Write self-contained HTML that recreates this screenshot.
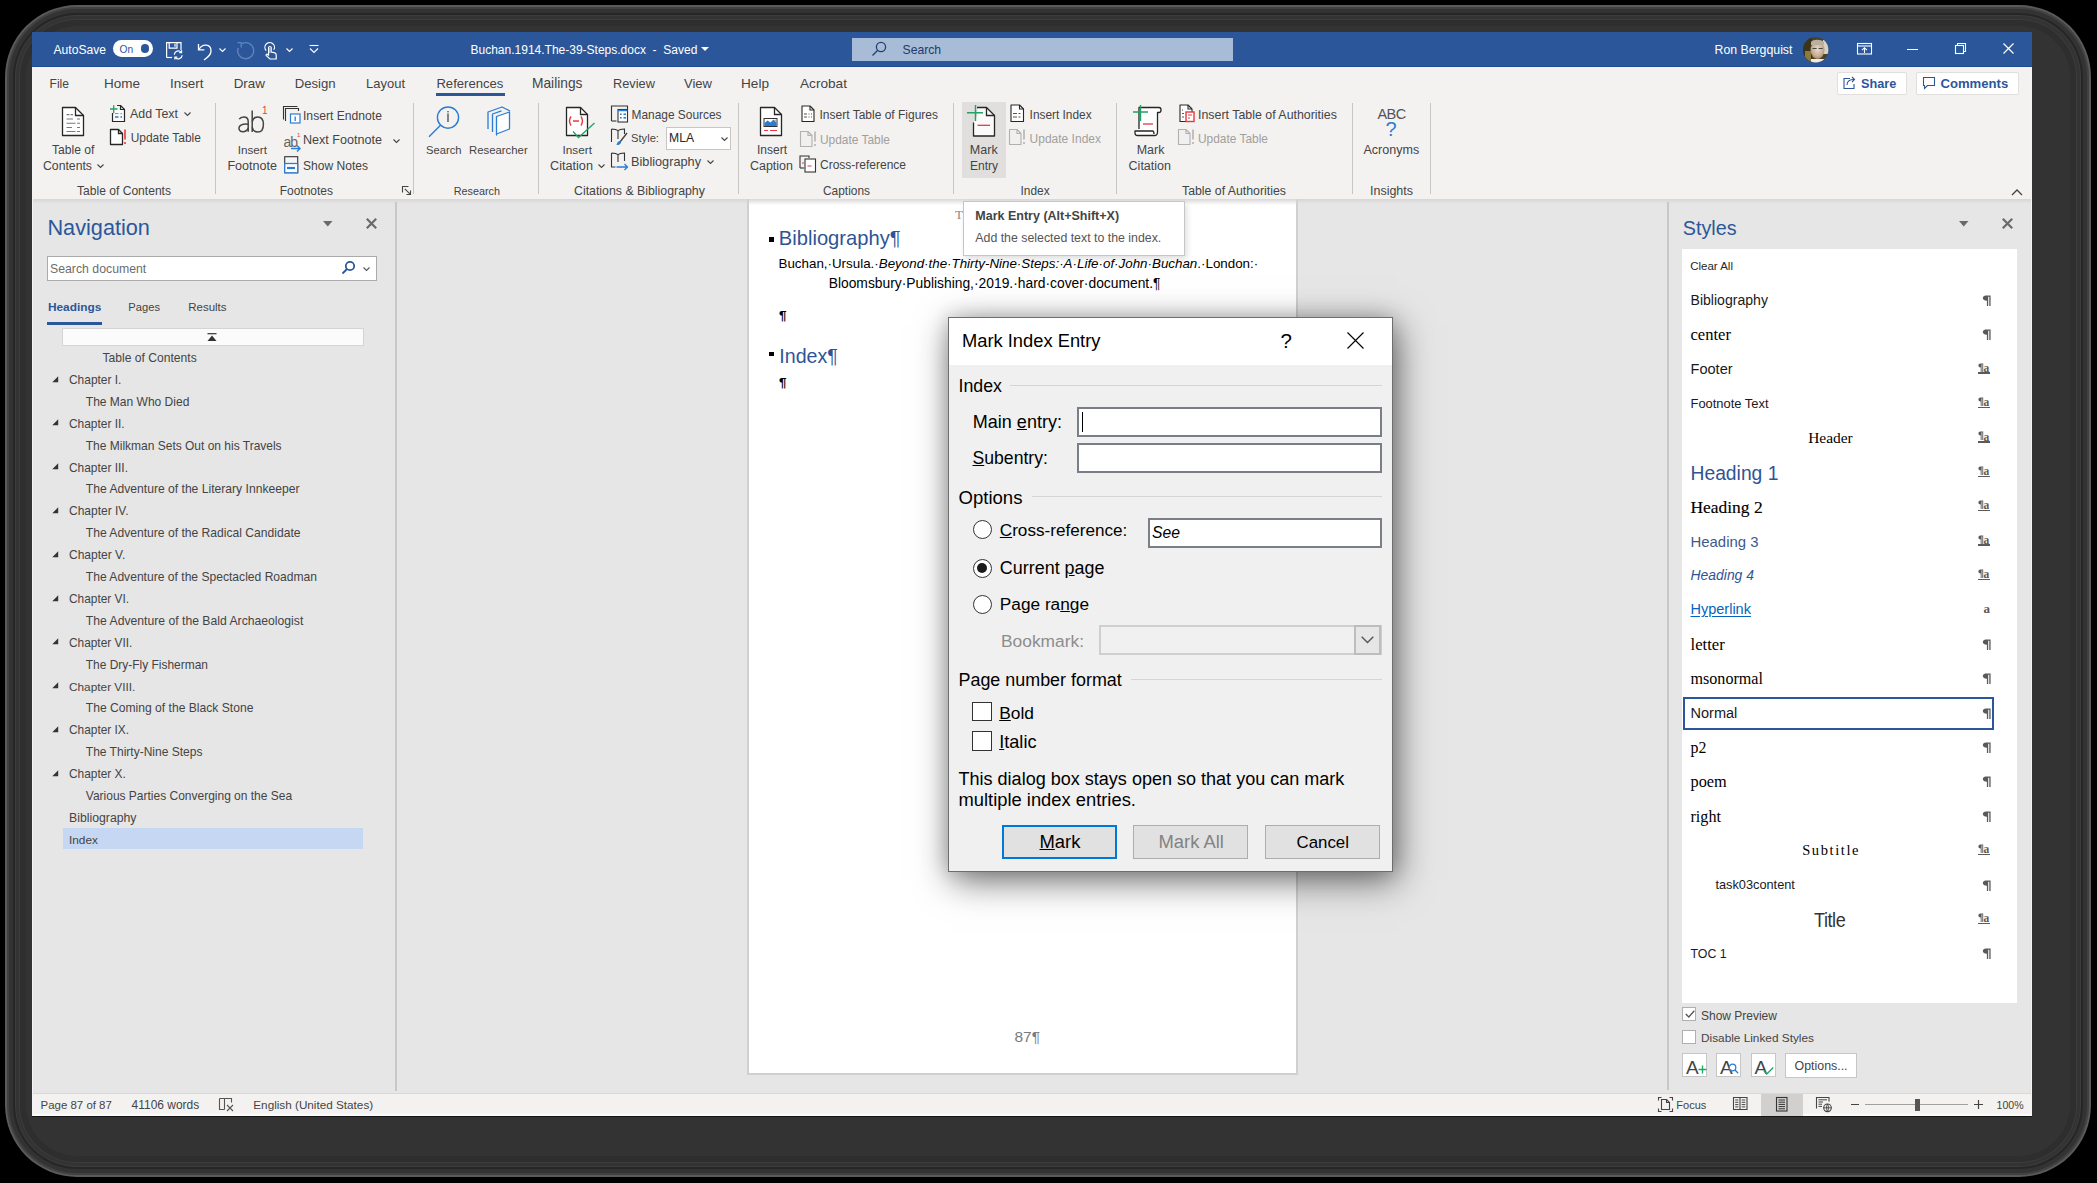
<!DOCTYPE html>
<html><head><meta charset="utf-8"><style>
html,body{margin:0;padding:0;}
body{width:2097px;height:1183px;background:#000;position:relative;overflow:hidden;font-family:"Liberation Sans",sans-serif;}
.a{position:absolute;}
.t{position:absolute;white-space:nowrap;line-height:1;}
svg{overflow:visible}
</style></head><body>

<div class="a" style="left:5px;top:5px;width:2086px;height:1172px;background:#5a5a5a;border-radius:72px;"></div>
<div class="a" style="left:7px;top:7px;width:2082px;height:1168px;background:#414141;border-radius:70px;"></div>
<div class="a" style="left:9px;top:9px;width:2078px;height:1164px;background:#333;border-radius:68px;"></div>
<div class="a" style="left:13px;top:13px;width:2070px;height:1156px;background:#262626;border-radius:64px;"></div>
<div class="a" style="left:15px;top:15px;width:2066px;height:1152px;background:#3c3c3c;border-radius:62px;"></div>
<div class="a" style="left:16px;top:16px;width:2064px;height:1150px;background:#333;border-radius:61px;"></div>
<div class="a" style="left:19px;top:19px;width:2058px;height:1144px;background:#3c3c3c;border-radius:58px;"></div>
<div class="a" style="left:20px;top:20px;width:2056px;height:1142px;background:#2e2e2e;border-radius:57px;"></div>
<div class="a" style="left:26px;top:26px;width:2044px;height:1130px;background:#333;border-radius:51px;"></div>
<div class="a" style="left:32px;top:32px;width:2000px;height:1084px;background:#e6e6e6;"></div>
<div class="a" style="left:32px;top:32px;width:2000px;height:35px;background:#2b579a;"></div>
<div class="a" style="left:32px;top:66px;width:2000px;height:1px;background:#1f4c8c;"></div>
<div class="a" style="left:32px;top:67px;width:2000px;height:132px;background:#f3f2f1;"></div>
<div class="a" style="left:32px;top:199px;width:2000px;height:5px;background:linear-gradient(#d6d6d6,#e6e6e6);"></div>
<div class="a" style="left:32px;top:1093px;width:2000px;height:23px;background:#f3f2f1;border-top:1px solid #d8d8d8;box-sizing:border-box;"></div>
<div class="a" style="left:32px;top:1114px;width:2000px;height:2px;background:#fbfbfb;"></div>
<div class="a" style="left:32px;top:1116px;width:2000px;height:1px;background:#151515;"></div>
<div class="a" style="left:32px;top:67px;width:1px;height:1049px;background:#f4f4f4;"></div>
<div class="a" style="left:2031px;top:67px;width:1px;height:1049px;background:#f4f4f4;"></div>
<div class="t" style="left:53.5px;top:44px;font-size:12.1px;color:#fff;">AutoSave</div>
<div class="a" style="left:113px;top:40px;width:40px;height:17px;background:#fff;border-radius:9px;"></div>
<div class="t" style="left:119.5px;top:45px;font-size:10.2px;color:#2b579a;">On</div>
<div class="a" style="left:140.5px;top:44.3px;width:8.5px;height:8.5px;background:#2b579a;border-radius:50%;"></div>
<svg class="a" style="left:166px;top:42px;" width="18" height="17" viewBox="0 0 18 17"><g fill="none" stroke="#fff" stroke-width="1.2"><path d="M0.6 15.5V0.6h14.4v7.5"/><path d="M0.6 15.5h5.5"/><path d="M3.2 0.6v5.6h7.8V0.6"/><path d="M9 1.8v3"/></g><g fill="none" stroke="#fff" stroke-width="1.2"><path d="M8.3 12.6a4 4 0 0 1 7-2.3"/><path d="M16.2 13.2a4 4 0 0 1-7 2.3"/><path d="M15.6 8.2v2.4h-2.4"/><path d="M8.9 17.6v-2.4h2.4"/></g></svg>
<svg class="a" style="left:197px;top:42px;" width="17" height="18" viewBox="0 0 17 18"><g fill="none" stroke="#fff" stroke-width="1.3"><path d="M2 7.5c3-6 12-6 12 1.5c0 4-3 6-7 9"/><path d="M1.5 2v5.8h5.8"/></g></svg>
<svg class="a" style="left:219px;top:48px;" width="7" height="4" viewBox="0 0 7 4"><path d="M0.5 0.5l3 3l3-3" fill="none" stroke="#fff" stroke-width="1.1"/></svg>
<svg class="a" style="left:237px;top:42px;" width="18" height="18" viewBox="0 0 18 18"><g fill="none" stroke="#5f84bd" stroke-width="1.3"><path d="M5.1 1.6A8 8 0 1 1 1.2 6"/><path d="M0.5 0.7H4.2V5.5"/></g></svg>
<svg class="a" style="left:264px;top:41.5px;" width="14" height="18" viewBox="0 0 14 18"><g fill="none" stroke="#fff" stroke-width="1.2"><path d="M2.2 8.6A4.8 4.8 0 1 1 9.8 7.8"/><path d="M4.6 13.5V5.8a1.3 1.3 0 0 1 2.6 0V10l3 0.6c1.3 0.3 2 1 2 2.3V17H6L2.3 13.6c-0.6-0.7 0-1.8 1-1.3l1.3 1.2"/></g><path d="M5.9 6v5" stroke="#9fb6d8" stroke-width="1.6"/></svg>
<svg class="a" style="left:286px;top:48px;" width="7" height="4" viewBox="0 0 7 4"><path d="M0.5 0.5l3 3l3-3" fill="none" stroke="#fff" stroke-width="1.1"/></svg>
<svg class="a" style="left:309px;top:45px;" width="10" height="9" viewBox="0 0 10 9"><g fill="none" stroke="#fff" stroke-width="1.1"><path d="M0.5 0.5h9"/><path d="M1 3.5l4 4l4-4"/></g></svg>
<div class="t" style="left:470.5px;top:44px;font-size:12.0px;color:#fff;">Buchan.1914.The-39-Steps.docx &nbsp;- &nbsp;Saved</div>
<svg class="a" style="left:701px;top:47px;" width="8" height="5" viewBox="0 0 8 5"><path d="M0 0h8l-4 4z" fill="#fff"/></svg>
<div class="a" style="left:852px;top:38px;width:381px;height:23px;background:#a8bcd8;"></div>
<svg class="a" style="left:871px;top:41px;" width="16" height="16" viewBox="0 0 16 16"><g fill="none" stroke="#24416e" stroke-width="1.3"><circle cx="10" cy="6" r="4.6"/><path d="M6.7 9.3L1.5 14.5"/></g></svg>
<div class="t" style="left:902.5px;top:44px;font-size:12.2px;color:#1e3b66;">Search</div>
<div class="t" style="left:1714.5px;top:44px;font-size:12.3px;color:#fff;">Ron Bergquist</div>
<svg class="a" style="left:1802.6px;top:36.6px;" width="25.4" height="25.4" viewBox="0 0 25.4 25.4"><defs><clipPath id="av"><circle cx="12.7" cy="12.7" r="12.7"/></clipPath><radialGradient id="fg" cx="0.5" cy="0.45" r="0.55"><stop offset="0" stop-color="#e9dccd"/><stop offset="0.7" stop-color="#c9ae92"/><stop offset="1" stop-color="#a88a6a"/></radialGradient></defs><g clip-path="url(#av)"><rect width="26" height="26" fill="#4a4226"/><rect x="0" y="0" width="9" height="26" fill="#3a3418"/><rect x="2" y="14" width="6" height="12" fill="#8c7a3a"/><rect x="20" y="3" width="6" height="14" fill="#d8d2c0"/><ellipse cx="14.5" cy="13" rx="7" ry="9" fill="url(#fg)"/><path d="M8 5c2-3 10-3 13 0v3H8z" fill="#b8b0a0"/><path d="M9.5 11.5h4.2M15.5 11.5h4.2" stroke="#444" stroke-width="1"/><rect x="8" y="22" width="14" height="6" fill="#f0ece4"/></g></svg>
<svg class="a" style="left:1857px;top:43px;" width="15" height="12" viewBox="0 0 15 12"><g fill="none" stroke="#fff" stroke-width="1.1"><rect x="0.5" y="0.5" width="14" height="10.5"/><path d="M0.5 3h14"/><path d="M7.5 10V5"/><path d="M5 7.2l2.5-2.5l2.5 2.5"/></g></svg>
<div class="a" style="left:1907px;top:49px;width:11px;height:1.2px;background:#fff;"></div>
<svg class="a" style="left:1955px;top:43px;" width="11" height="11" viewBox="0 0 11 11"><g fill="none" stroke="#fff" stroke-width="1.1"><rect x="0.5" y="2.5" width="8" height="8"/><path d="M2.5 2.5v-2h8v8h-2"/></g></svg>
<svg class="a" style="left:2003px;top:43px;" width="11" height="11" viewBox="0 0 11 11"><g fill="none" stroke="#fff" stroke-width="1.2"><path d="M0.5 0.5l10 10M10.5 0.5l-10 10"/></g></svg>
<div class="t" style="left:49.5px;top:78px;font-size:12.09px;color:#444;">File</div>
<div class="t" style="left:104px;top:77px;font-size:13.5px;color:#444;">Home</div>
<div class="t" style="left:170px;top:77px;font-size:13.4px;color:#444;">Insert</div>
<div class="t" style="left:233.7px;top:77px;font-size:13.41px;color:#444;">Draw</div>
<div class="t" style="left:294.7px;top:77px;font-size:13.17px;color:#444;">Design</div>
<div class="t" style="left:366px;top:77px;font-size:12.99px;color:#444;">Layout</div>
<div class="t" style="left:436.4px;top:77px;font-size:13.12px;color:#444;">References</div>
<div class="t" style="left:532px;top:77px;font-size:13.76px;color:#444;">Mailings</div>
<div class="t" style="left:613px;top:78px;font-size:12.8px;color:#444;">Review</div>
<div class="t" style="left:684px;top:77px;font-size:13.02px;color:#444;">View</div>
<div class="t" style="left:741px;top:77px;font-size:13.61px;color:#444;">Help</div>
<div class="t" style="left:800px;top:77px;font-size:13.64px;color:#444;">Acrobat</div>
<div class="a" style="left:436px;top:93px;width:69px;height:3px;background:#2b579a;"></div>
<div class="a" style="left:1836.5px;top:71.5px;width:70px;height:23px;background:#fff;border:1px solid #e1dfdd;border-radius:2px;box-sizing:border-box;"></div>
<svg class="a" style="left:1843px;top:76px;" width="13" height="13" viewBox="0 0 13 13"><g fill="none" stroke="#2b579a" stroke-width="1.1"><path d="M7 2.5H1v10h10V8"/><path d="M4 9c0-4 3-5.5 7-5.5"/><path d="M9 1l2.5 2.5L9 6"/></g></svg>
<div class="t" style="left:1861px;top:78px;font-size:12.7px;color:#2b579a;font-weight:bold;">Share</div>
<div class="a" style="left:1915.5px;top:71.5px;width:103px;height:23px;background:#fff;border:1px solid #e1dfdd;border-radius:2px;box-sizing:border-box;"></div>
<svg class="a" style="left:1923px;top:77px;" width="12" height="12" viewBox="0 0 12 12"><g fill="none" stroke="#2b579a" stroke-width="1.1"><path d="M0.5 0.5h11v8h-7l-3 3v-3h-1z"/></g></svg>
<div class="t" style="left:1940.5px;top:77px;font-size:13.1px;color:#2b579a;font-weight:bold;">Comments</div>
<div class="a" style="left:215px;top:103px;width:1px;height:91px;background:#c8c6c4;"></div>
<div class="a" style="left:413px;top:103px;width:1px;height:91px;background:#c8c6c4;"></div>
<div class="a" style="left:538px;top:103px;width:1px;height:91px;background:#c8c6c4;"></div>
<div class="a" style="left:738px;top:103px;width:1px;height:91px;background:#c8c6c4;"></div>
<div class="a" style="left:953px;top:103px;width:1px;height:91px;background:#c8c6c4;"></div>
<div class="a" style="left:1116px;top:103px;width:1px;height:91px;background:#c8c6c4;"></div>
<div class="a" style="left:1352px;top:103px;width:1px;height:91px;background:#c8c6c4;"></div>
<div class="a" style="left:1430px;top:103px;width:1px;height:91px;background:#c8c6c4;"></div>
<div class="t" style="left:77px;top:185px;font-size:12.08px;color:#444;">Table of Contents</div>
<div class="t" style="left:279.7px;top:185px;font-size:11.98px;color:#444;">Footnotes</div>
<div class="t" style="left:453.7px;top:186px;font-size:10.82px;color:#444;">Research</div>
<div class="t" style="left:574px;top:185px;font-size:12.34px;color:#444;">Citations &amp; Bibliography</div>
<div class="t" style="left:823px;top:186px;font-size:11.91px;color:#444;">Captions</div>
<div class="t" style="left:1020.5px;top:186px;font-size:11.9px;color:#444;">Index</div>
<div class="t" style="left:1182px;top:185px;font-size:12.31px;color:#444;">Table of Authorities</div>
<div class="t" style="left:1370px;top:185px;font-size:12.48px;color:#444;">Insights</div>
<svg class="a" style="left:61px;top:106px;" width="24" height="31" viewBox="0 0 24 31"><path d="M1.5 1.5h13l8 8v20h-21z" fill="#fff" stroke="#262626" stroke-width="1.3" stroke-linejoin="round"/><path d="M14.5 1.5v8h8" fill="none" stroke="#262626" stroke-width="1.3"/><g stroke="#7a7a7a" stroke-width="1.1"><path d="M5.5 8.6h3M9.5 8.6h2.5M5.5 13h6.5M16 13h3M5.5 17.3h9M16 17.3h3M5.5 21.5h5.5M16 21.5h3M5.5 25.5h9M16 25.5h3"/></g></svg>
<div class="t" style="left:52px;top:144px;font-size:12.13px;color:#444;">Table of</div>
<div class="t" style="left:43px;top:160px;font-size:12.24px;color:#444;">Contents</div>
<svg class="a" style="left:96.5px;top:164px;" width="7" height="4" viewBox="0 0 7 4"><path d="M0.5 0.5l3 3l3-3" fill="none" stroke="#444" stroke-width="1.1"/></svg>
<svg class="a" style="left:109px;top:104px;" width="18" height="19" viewBox="0 0 18 19"><path d="M3.5 9v8.5h12V5.5l-4-4H8" fill="#fafafa" stroke="#262626" stroke-width="1.2" stroke-linejoin="round"/><path d="M11.5 1.5v4h4" fill="none" stroke="#262626" stroke-width="1.2"/><path d="M1 5h7.5M4.7 1.3v8" stroke="#21a366" stroke-width="1.3"/><path d="M6 9.6h3.5M11.5 9.6h1.5" stroke="#8a8a8a" stroke-width="1"/><path d="M6 13h3.5M11.5 13h1.5" stroke="#2b7cd3" stroke-width="1.3"/></svg>
<div class="t" style="left:130px;top:108px;font-size:12.39px;color:#444;">Add Text</div>
<svg class="a" style="left:183.5px;top:111.5px;" width="7" height="4" viewBox="0 0 7 4"><path d="M0.5 0.5l3 3l3-3" fill="none" stroke="#444" stroke-width="1.1"/></svg>
<svg class="a" style="left:109px;top:128px;" width="18" height="18" viewBox="0 0 18 18"><path d="M1.5 1.5h8l4 4v11h-12z" fill="#fff" stroke="#262626" stroke-width="1.3" stroke-linejoin="round"/><path d="M9.5 1.5v4h4" fill="none" stroke="#262626" stroke-width="1.3"/><path d="M16 1.5v10M16 14v2" stroke="#e8383d" stroke-width="1.6"/></svg>
<div class="t" style="left:130.7px;top:133px;font-size:11.96px;color:#444;">Update Table</div>
<svg class="a" style="left:236px;top:109px;" width="32" height="25" viewBox="0 0 32 25"><g fill="none" stroke="#444" stroke-width="1.5"><path d="M3.2 10.2c1-1.6 2.6-2.3 4.6-2.3c3 0 4.4 1.6 4.4 4.6V22.8"/><path d="M12.2 15.2c-1.6-0.2-3.4-0.2-4.8 0.1c-2.8 0.6-4.4 2-4.4 4c0 2.2 1.6 3.4 4 3.4c2.4 0 4.2-1.4 5.2-3.6"/><path d="M16.2 1.5V23"/><path d="M16.2 12.5c1-3 3-4.6 5.6-4.6c3.6 0 5.6 3 5.6 7.5c0 4.6-2.2 7.6-5.8 7.6c-2.6 0-4.6-1.6-5.4-4.6"/></g></svg>
<div class="t" style="left:262px;top:106px;font-size:10px;color:#e8383d;">1</div>
<div class="t" style="left:237.7px;top:144px;font-size:11.72px;color:#444;">Insert</div>
<div class="t" style="left:227.4px;top:160px;font-size:12.56px;color:#444;">Footnote</div>
<svg class="a" style="left:283px;top:106px;" width="18" height="18" viewBox="0 0 18 18"><g fill="none" stroke="#333" stroke-width="1.1"><path d="M0.5 13.5V0.5h14"/><path d="M2.5 15V2.5h13V5"/></g><g fill="#fff" stroke="#2b7cd3" stroke-width="1.2"><rect x="7.5" y="8" width="9.5" height="9"/></g><path d="M12.2 10.5v4.5" stroke="#2b7cd3" stroke-width="1.3"/></svg>
<div class="t" style="left:303px;top:110px;font-size:12.15px;color:#444;">Insert Endnote</div>
<div class="t" style="left:283.5px;top:135px;font-size:14px;color:#666;letter-spacing:-1px;">ab</div>
<div class="t" style="left:297px;top:132px;font-size:6px;color:#e8383d;">1</div>
<svg class="a" style="left:290px;top:144px;" width="12" height="9" viewBox="0 0 12 9"><g fill="none" stroke="#2b7cd3" stroke-width="1.4"><path d="M1 4.5h9M7 1.5l3 3l-3 3"/></g></svg>
<div class="t" style="left:303px;top:134px;font-size:12.58px;color:#444;">Next Footnote</div>
<svg class="a" style="left:392.5px;top:139px;" width="7" height="4" viewBox="0 0 7 4"><path d="M0.5 0.5l3 3l3-3" fill="none" stroke="#444" stroke-width="1.1"/></svg>
<svg class="a" style="left:283.5px;top:155.5px;" width="15" height="18" viewBox="0 0 15 18"><rect x="0.7" y="0.7" width="13" height="16" fill="#f6f6f6" stroke="#333" stroke-width="1.1"/><rect x="0.7" y="7.5" width="13" height="9.3" fill="#fff" stroke="#2b7cd3" stroke-width="1.3"/><path d="M3 12h8" stroke="#2b7cd3" stroke-width="2.2"/></svg>
<div class="t" style="left:303px;top:160px;font-size:12.05px;color:#444;">Show Notes</div>
<svg class="a" style="left:402px;top:186px;" width="9" height="9" viewBox="0 0 9 9"><g fill="none" stroke="#444" stroke-width="1.1"><path d="M0.5 6.5V0.5h6"/><path d="M2.8 2.8l5.4 5.4M8.5 4.5v4H4.5"/></g></svg>
<svg class="a" style="left:427px;top:105px;" width="34" height="34" viewBox="0 0 34 34"><circle cx="21" cy="12.6" r="10.6" fill="none" stroke="#2b7cd3" stroke-width="1.4"/><path d="M13.5 20.2L2 31.7" stroke="#2b7cd3" stroke-width="1.5"/><path d="M21 8.5v8.5" stroke="#444" stroke-width="1.3"/><circle cx="21" cy="6.7" r="0.8" fill="#444"/></svg>
<div class="t" style="left:426px;top:145px;font-size:11.2px;color:#444;">Search</div>
<svg class="a" style="left:486px;top:106px;" width="26" height="31" viewBox="0 0 26 31"><g fill="none" stroke="#2b7cd3" stroke-width="1.3" stroke-linejoin="round"><path d="M2 23V6l14-5l8 4"/><path d="M6.5 26V8l9-3.2"/><path d="M10.5 29V10.5L23.5 6v17L10.5 28z" fill="#fff"/></g></svg>
<div class="t" style="left:469px;top:145px;font-size:11.36px;color:#444;">Researcher</div>
<svg class="a" style="left:565px;top:106px;" width="26" height="32" viewBox="0 0 26 32"><path d="M1.5 1.5h14l7 7v21h-21z" fill="#fff" stroke="#262626" stroke-width="1.3" stroke-linejoin="round"/><path d="M15.5 1.5v7h7" fill="none" stroke="#262626" stroke-width="1.3"/><g fill="none" stroke="#e8383d" stroke-width="1.4"><path d="M6 10.5c-2 3-2 6 0 9M16 10.5c2 3 2 6 0 9M8 15h6"/></g><path d="M8 25.5l5.5 6l16-14.5" fill="none" stroke="#21a366" stroke-width="1.3"/></svg>
<div class="t" style="left:562.5px;top:145px;font-size:11.8px;color:#444;">Insert</div>
<div class="t" style="left:550px;top:160px;font-size:12.68px;color:#444;">Citation</div>
<svg class="a" style="left:597.5px;top:164px;" width="7" height="4" viewBox="0 0 7 4"><path d="M0.5 0.5l3 3l3-3" fill="none" stroke="#444" stroke-width="1.1"/></svg>
<svg class="a" style="left:610px;top:105px;" width="19" height="18" viewBox="0 0 19 18"><g fill="none" stroke="#333" stroke-width="1.1"><path d="M1.5 16V1h16v3"/><path d="M1.5 16h5"/></g><rect x="8" y="4.5" width="9.5" height="12.5" fill="#fff" stroke="#333" stroke-width="1.1"/><path d="M8 5.5h9.5" stroke="#2b7cd3" stroke-width="1.5"/><g fill="#2b7cd3"><rect x="10" y="8.5" width="1.6" height="1.6"/><rect x="13.5" y="8.5" width="2.5" height="1.6"/><rect x="10" y="12" width="1.6" height="1.6"/><rect x="13.5" y="12" width="2.5" height="1.6"/></g></svg>
<div class="t" style="left:631.5px;top:110px;font-size:11.92px;color:#444;">Manage Sources</div>
<svg class="a" style="left:610px;top:128px;" width="19" height="19" viewBox="0 0 19 19"><g fill="none" stroke="#333" stroke-width="1.1"><path d="M1.5 1v13M1.5 1c3 0 5 0 6.5 2c1.5-2 3.5-2 6.5-2v5M8 3v8"/></g><path d="M17 5l-7 9" stroke="#444" stroke-width="1.4"/><path d="M10 13c-2 0-3 2-3.5 4c2 0 4.5-0.5 4.5-3z" fill="#2b7cd3"/></svg>
<div class="t" style="left:631px;top:133px;font-size:11.19px;color:#444;">Style:</div>
<div class="a" style="left:665.5px;top:126.5px;width:65px;height:23px;background:#fff;border:1px solid #c8c6c4;box-sizing:border-box;"></div>
<div class="t" style="left:669px;top:132px;font-size:12.16px;color:#262626;">MLA</div>
<svg class="a" style="left:720.5px;top:137px;" width="7" height="4" viewBox="0 0 7 4"><path d="M0.5 0.5l3 3l3-3" fill="none" stroke="#444" stroke-width="1.1"/></svg>
<svg class="a" style="left:610px;top:152px;" width="19" height="19" viewBox="0 0 19 19"><g fill="none" stroke="#333" stroke-width="1.1"><path d="M1.5 1v14h4M1.5 1c3 0 5 0 6.5 2c1.5-2 3.5-2 6.5-2v8M8 3v7"/></g><g fill="none" stroke="#2b7cd3" stroke-width="1.3"><path d="M6.5 15h11M14.5 12l3 3l-3 3"/></g></svg>
<div class="t" style="left:631px;top:156px;font-size:12.72px;color:#444;">Bibliography</div>
<svg class="a" style="left:706.5px;top:160px;" width="7" height="4" viewBox="0 0 7 4"><path d="M0.5 0.5l3 3l3-3" fill="none" stroke="#444" stroke-width="1.1"/></svg>
<svg class="a" style="left:759px;top:106px;" width="25" height="31" viewBox="0 0 25 31"><path d="M1.5 1.5h14l7 7v21h-21z" fill="#fff" stroke="#262626" stroke-width="1.3" stroke-linejoin="round"/><path d="M15.5 1.5v7h7" fill="none" stroke="#262626" stroke-width="1.3"/><rect x="5" y="12.5" width="13" height="8" fill="#fff" stroke="#333" stroke-width="1"/><path d="M5.5 20v-3l3-2.5l3 2l3-3l3 3v3.5z" fill="#2b7cd3"/><path d="M5 24.5h4M11 24.5h7" stroke="#e8383d" stroke-width="1.2"/><circle cx="16.5" cy="14.3" r="0.8" fill="#f0a030"/></svg>
<div class="t" style="left:757px;top:144px;font-size:12.0px;color:#444;">Insert</div>
<div class="t" style="left:750px;top:160px;font-size:12.47px;color:#444;">Caption</div>
<svg class="a" style="left:801px;top:105px;" width="15" height="18" viewBox="0 0 15 18"><path d="M1 1h8l4 4v11.5h-12z" fill="#fff" stroke="#262626" stroke-width="1.1" stroke-linejoin="round"/><path d="M9 1v4h4" fill="none" stroke="#262626" stroke-width="1.1"/><g stroke="#555" stroke-width="1.1"><path d="M3 9h3M7.5 9h1M10 9h1M3 12h3M7.5 12h1M10 12h1"/></g></svg>
<div class="t" style="left:819.5px;top:109px;font-size:12.0px;color:#444;">Insert Table of Figures</div>
<svg class="a" style="left:799px;top:130px;" width="18" height="18" viewBox="0 0 18 18"><path d="M1.5 1.5h7.5l4 4v11h-11.5z" fill="#f0f0f0" stroke="#b3b0ad" stroke-width="1.1" stroke-linejoin="round"/><path d="M9.0 1.5v4h4" fill="none" stroke="#b3b0ad" stroke-width="1.1"/><path d="M16 1.5v10M16 14v2" stroke="#b3b0ad" stroke-width="1.5"/></svg>
<div class="t" style="left:820px;top:135px;font-size:11.91px;color:#a19f9d;">Update Table</div>
<svg class="a" style="left:799px;top:155px;" width="18" height="18" viewBox="0 0 18 18"><g fill="none" stroke="#333" stroke-width="1.1"><path d="M1 13V1h9v2"/><path d="M1 13h4"/></g><rect x="6" y="4" width="10.5" height="13" fill="#fff" stroke="#333" stroke-width="1.1"/><path d="M3 8h2M8.5 11h4" stroke="#e8383d" stroke-width="1.2"/></svg>
<div class="t" style="left:820px;top:159px;font-size:12.0px;color:#444;">Cross-reference</div>
<div class="a" style="left:962px;top:102px;width:44px;height:76px;background:#e1dfdd;"></div>
<svg class="a" style="left:966px;top:104px;" width="30" height="34" viewBox="0 0 30 34"><path d="M7.5 18.5V32h21V11.5l-8-8H11.5V11.5" fill="#fafafa" stroke="none"/><path d="M11 3.5h9.5l8 8V32h-21V18.5" fill="none" stroke="#262626" stroke-width="1.3" stroke-linejoin="round"/><path d="M20.5 3.5v8h8" fill="none" stroke="#262626" stroke-width="1.3"/><path d="M1 8.8h16M9.5 1v16" stroke="#21a366" stroke-width="1.4"/><path d="M11.5 21.3h12.5" stroke="#e8383d" stroke-width="1.3"/></svg>
<div class="t" style="left:969.8px;top:144px;font-size:12.56px;color:#444;">Mark</div>
<div class="t" style="left:970px;top:160px;font-size:12.0px;color:#444;">Entry</div>
<svg class="a" style="left:1010px;top:104px;" width="15" height="19" viewBox="0 0 15 19"><path d="M1 1h8.5l4 4v12.5h-12.5z" fill="#fff" stroke="#262626" stroke-width="1.1" stroke-linejoin="round"/><path d="M9.5 1v4h4" fill="none" stroke="#262626" stroke-width="1.1"/><g stroke="#555" stroke-width="1.1"><path d="M3 9.5h4M8.5 9.5h2M3 13h4M8.5 13h2"/></g></svg>
<div class="t" style="left:1029.6px;top:110px;font-size:11.87px;color:#444;">Insert Index</div>
<svg class="a" style="left:1008px;top:128px;" width="18" height="18" viewBox="0 0 18 18"><path d="M1.5 1.5h7.5l4 4v11h-11.5z" fill="#f0f0f0" stroke="#b3b0ad" stroke-width="1.1" stroke-linejoin="round"/><path d="M9.0 1.5v4h4" fill="none" stroke="#b3b0ad" stroke-width="1.1"/><path d="M16 1.5v10M16 14v2" stroke="#b3b0ad" stroke-width="1.5"/></svg>
<div class="t" style="left:1029.6px;top:133px;font-size:12.0px;color:#a19f9d;">Update Index</div>
<svg class="a" style="left:1132px;top:104px;" width="34" height="34" viewBox="0 0 34 34"><g fill="#fff" stroke="#262626" stroke-width="1.3" stroke-linejoin="round"><path d="M7 25V3.5h20c1.5 0 2 1 2 2.5s-0.5 2.5-2 2.5h-1.5V28c0 2-1 3.5-3 3.5H5.5c-1.5 0-2.5-1-2.5-2.5V27h17.5c1 0 1.5 1.5 1.5 3"/></g><path d="M1 8h15M8.5 1v16" stroke="#21a366" stroke-width="1.4"/><path d="M11 20h10" stroke="#e8383d" stroke-width="1.3"/></svg>
<div class="t" style="left:1136.7px;top:144px;font-size:12.47px;color:#444;">Mark</div>
<div class="t" style="left:1128.6px;top:160px;font-size:12.5px;color:#444;">Citation</div>
<svg class="a" style="left:1179px;top:104px;" width="17" height="19" viewBox="0 0 17 19"><path d="M1 1h8l4 4v12.5h-12z" fill="#fff" stroke="#262626" stroke-width="1.1" stroke-linejoin="round"/><path d="M9 1v4h4" fill="none" stroke="#262626" stroke-width="1.1"/><g stroke="#555" stroke-width="1.1"><path d="M3 6h1M3 9.5h2M3 13h2"/></g><rect x="7" y="8" width="8" height="9.5" fill="#fff" stroke="#e8383d" stroke-width="1.4"/><path d="M9 11h4M9 14h2" stroke="#e8383d" stroke-width="1.2"/></svg>
<div class="t" style="left:1198px;top:109px;font-size:12.4px;color:#444;">Insert Table of Authorities</div>
<svg class="a" style="left:1177px;top:128px;" width="18" height="18" viewBox="0 0 18 18"><path d="M1.5 1.5h7.5l4 4v11h-11.5z" fill="#f0f0f0" stroke="#b3b0ad" stroke-width="1.1" stroke-linejoin="round"/><path d="M9.0 1.5v4h4" fill="none" stroke="#b3b0ad" stroke-width="1.1"/><path d="M16 1.5v10M16 14v2" stroke="#b3b0ad" stroke-width="1.5"/></svg>
<div class="t" style="left:1198px;top:134px;font-size:11.91px;color:#a19f9d;">Update Table</div>
<div class="t" style="left:1377.5px;top:107px;font-size:14.5px;color:#555;letter-spacing:-0.6px;">ABC</div>
<div class="t" style="left:1385.5px;top:119px;font-size:20px;color:#2b7cd3;">?</div>
<div class="t" style="left:1363.4px;top:144px;font-size:12.55px;color:#444;">Acronyms</div>
<svg class="a" style="left:2011px;top:189px;" width="12" height="7" viewBox="0 0 12 7"><path d="M1 6l5-5l5 5" fill="none" stroke="#444" stroke-width="1.3"/></svg>
<div class="a" style="left:395px;top:202px;width:2px;height:889px;background:#c8c8c8;"></div>
<div class="t" style="left:47.4px;top:217px;font-size:21.71px;color:#2b579a;">Navigation</div>
<svg class="a" style="left:323.3px;top:221.3px;" width="9.5" height="6" viewBox="0 0 9.5 6"><path d="M0 0h9.5l-4.75 5.6z" fill="#6a6a6a"/></svg>
<svg class="a" style="left:366px;top:218.3px;" width="11" height="11" viewBox="0 0 11 11"><path d="M0.8 0.8l9.4 9.4M10.2 0.8l-9.4 9.4" stroke="#6a6a6a" stroke-width="2.2"/></svg>
<div class="a" style="left:46.8px;top:256.4px;width:330px;height:24.3px;background:#fff;border:1px solid #ababab;box-sizing:border-box;"></div>
<div class="t" style="left:50px;top:263px;font-size:12.29px;color:#6d6d6d;">Search document</div>
<svg class="a" style="left:340px;top:260px;" width="16" height="16" viewBox="0 0 16 16"><g fill="none" stroke="#2b579a" stroke-width="1.8"><circle cx="10" cy="6" r="4.2"/><path d="M7 9L2.5 13.5"/></g></svg>
<svg class="a" style="left:363px;top:267px;" width="7" height="4" viewBox="0 0 7 4"><path d="M0.5 0.5l3 3l3-3" fill="none" stroke="#555" stroke-width="1.1"/></svg>
<div class="t" style="left:48px;top:302px;font-size:11.84px;color:#2b579a;font-weight:bold;">Headings</div>
<div class="t" style="left:128.3px;top:302px;font-size:11.18px;color:#444;">Pages</div>
<div class="t" style="left:188.2px;top:302px;font-size:11.51px;color:#444;">Results</div>
<div class="a" style="left:47px;top:321.5px;width:55px;height:3px;background:#2b579a;"></div>
<div class="a" style="left:62.4px;top:328.3px;width:301.6px;height:18.1px;background:#fbfbfb;border:1px solid #d4d4d4;box-sizing:border-box;"></div>
<svg class="a" style="left:207px;top:333px;" width="10" height="9" viewBox="0 0 10 9"><path d="M0.5 0.7h9" stroke="#333" stroke-width="1.2"/><path d="M5 2.5l4.5 5.5h-9z" fill="#333"/></svg>
<div class="a" style="left:63.2px;top:828px;width:299.8px;height:20.8px;background:#c5d7f2;"></div>
<div class="t" style="left:102.5px;top:352px;font-size:12.11px;color:#444;">Table of Contents</div>
<div class="t" style="left:69px;top:375px;font-size:11.95px;color:#444;">Chapter I.</div>
<svg class="a" style="left:52px;top:375.49999999999994px;" width="6.5" height="6.5" viewBox="0 0 6.5 6.5"><path d="M6.2 0.3V6.2H0.3z" fill="#333"/></svg>
<div class="t" style="left:85.8px;top:396px;font-size:12.03px;color:#444;">The Man Who Died</div>
<div class="t" style="left:69px;top:419px;font-size:11.93px;color:#444;">Chapter II.</div>
<svg class="a" style="left:52px;top:419.29999999999995px;" width="6.5" height="6.5" viewBox="0 0 6.5 6.5"><path d="M6.2 0.3V6.2H0.3z" fill="#333"/></svg>
<div class="t" style="left:85.8px;top:440px;font-size:11.99px;color:#444;">The Milkman Sets Out on his Travels</div>
<div class="t" style="left:69px;top:463px;font-size:11.93px;color:#444;">Chapter III.</div>
<svg class="a" style="left:52px;top:463.09999999999997px;" width="6.5" height="6.5" viewBox="0 0 6.5 6.5"><path d="M6.2 0.3V6.2H0.3z" fill="#333"/></svg>
<div class="t" style="left:85.8px;top:483px;font-size:12.13px;color:#444;">The Adventure of the Literary Innkeeper</div>
<div class="t" style="left:69px;top:505px;font-size:11.99px;color:#444;">Chapter IV.</div>
<svg class="a" style="left:52px;top:506.8999999999999px;" width="6.5" height="6.5" viewBox="0 0 6.5 6.5"><path d="M6.2 0.3V6.2H0.3z" fill="#333"/></svg>
<div class="t" style="left:85.8px;top:527px;font-size:12.12px;color:#444;">The Adventure of the Radical Candidate</div>
<div class="t" style="left:69px;top:549px;font-size:12.02px;color:#444;">Chapter V.</div>
<svg class="a" style="left:52px;top:550.7px;" width="6.5" height="6.5" viewBox="0 0 6.5 6.5"><path d="M6.2 0.3V6.2H0.3z" fill="#333"/></svg>
<div class="t" style="left:85.8px;top:571px;font-size:12.1px;color:#444;">The Adventure of the Spectacled Roadman</div>
<div class="t" style="left:69px;top:594px;font-size:11.88px;color:#444;">Chapter VI.</div>
<svg class="a" style="left:52px;top:594.5px;" width="6.5" height="6.5" viewBox="0 0 6.5 6.5"><path d="M6.2 0.3V6.2H0.3z" fill="#333"/></svg>
<div class="t" style="left:85.8px;top:615px;font-size:12.19px;color:#444;">The Adventure of the Bald Archaeologist</div>
<div class="t" style="left:69px;top:638px;font-size:11.86px;color:#444;">Chapter VII.</div>
<svg class="a" style="left:52px;top:638.3px;" width="6.5" height="6.5" viewBox="0 0 6.5 6.5"><path d="M6.2 0.3V6.2H0.3z" fill="#333"/></svg>
<div class="t" style="left:85.8px;top:660px;font-size:11.96px;color:#444;">The Dry-Fly Fisherman</div>
<div class="t" style="left:69px;top:682px;font-size:11.84px;color:#444;">Chapter VIII.</div>
<svg class="a" style="left:52px;top:682.1px;" width="6.5" height="6.5" viewBox="0 0 6.5 6.5"><path d="M6.2 0.3V6.2H0.3z" fill="#333"/></svg>
<div class="t" style="left:85.8px;top:702px;font-size:12.12px;color:#444;">The Coming of the Black Stone</div>
<div class="t" style="left:69px;top:725px;font-size:11.88px;color:#444;">Chapter IX.</div>
<svg class="a" style="left:52px;top:725.9px;" width="6.5" height="6.5" viewBox="0 0 6.5 6.5"><path d="M6.2 0.3V6.2H0.3z" fill="#333"/></svg>
<div class="t" style="left:85.8px;top:746px;font-size:12.02px;color:#444;">The Thirty-Nine Steps</div>
<div class="t" style="left:69px;top:769px;font-size:11.9px;color:#444;">Chapter X.</div>
<svg class="a" style="left:52px;top:769.7px;" width="6.5" height="6.5" viewBox="0 0 6.5 6.5"><path d="M6.2 0.3V6.2H0.3z" fill="#333"/></svg>
<div class="t" style="left:85.8px;top:790px;font-size:11.99px;color:#444;">Various Parties Converging on the Sea</div>
<div class="t" style="left:69px;top:812px;font-size:12.27px;color:#444;">Bibliography</div>
<div class="t" style="left:69px;top:835px;font-size:11.84px;color:#444;">Index</div>
<div class="a" style="left:747px;top:199px;width:551px;height:876px;background:#fff;border:2px solid #d0d0d0;border-top:none;box-sizing:border-box;"></div>
<div class="a" style="left:749px;top:199px;width:548px;height:6px;background:linear-gradient(#d8d8d8,rgba(255,255,255,0));"></div>
<div class="a" style="left:769.3px;top:237px;width:4.8px;height:4.8px;background:#000;"></div>
<div class="t" style="left:778.8px;top:228px;font-size:20.17px;color:#2f5496;">Bibliography¶</div>
<div class="t" style="left:778.5px;top:257.2px;font-size:13.37px;color:#000;">Buchan,·Ursula.·<i>Beyond·the·Thirty-Nine·Steps:·A·Life·of·John·Buchan</i>.·London:·</div>
<div class="t" style="left:828.7px;top:277px;font-size:13.83px;color:#000;">Bloomsbury·Publishing,·2019.·hard·cover·document.¶</div>
<div class="t" style="left:779px;top:309px;font-size:13.5px;color:#000;font-weight:bold;">¶</div>
<div class="a" style="left:769.3px;top:351.5px;width:4.8px;height:4.8px;background:#000;"></div>
<div class="t" style="left:779.3px;top:347px;font-size:19.61px;color:#2f5496;">Index¶</div>
<div class="t" style="left:779px;top:376px;font-size:13.5px;color:#000;font-weight:bold;">¶</div>
<div class="t" style="left:955px;top:208px;font-size:13px;color:#888;font-family:'Liberation Serif', serif;">T</div>
<div class="t" style="left:1014.4px;top:1029px;font-size:15.52px;color:#7a7a7a;">87¶</div>
<div class="a" style="left:962.6px;top:200.6px;width:222px;height:55px;background:#fff;border:1px solid #c6c6c6;box-sizing:border-box;box-shadow:2px 3px 6px rgba(0,0,0,0.13);"></div>
<div class="t" style="left:975.3px;top:210px;font-size:12.51px;color:#444;font-weight:bold;">Mark Entry (Alt+Shift+X)</div>
<div class="t" style="left:975.3px;top:232px;font-size:12.35px;color:#555;">Add the selected text to the index.</div>
<div class="a" style="left:1667px;top:202px;width:2px;height:888px;background:#c8c8c8;"></div>
<div class="t" style="left:1682.8px;top:219px;font-size:19.75px;color:#2b579a;">Styles</div>
<svg class="a" style="left:1958.8px;top:221.3px;" width="9.5" height="6" viewBox="0 0 9.5 6"><path d="M0 0h9.5l-4.75 5.6z" fill="#6a6a6a"/></svg>
<svg class="a" style="left:2001.5px;top:218px;" width="11" height="11" viewBox="0 0 11 11"><path d="M0.8 0.8l9.4 9.4M10.2 0.8l-9.4 9.4" stroke="#6a6a6a" stroke-width="2.2"/></svg>
<div class="a" style="left:1681.8px;top:249px;width:335.4px;height:754px;background:#fff;"></div>
<div class="t" style="left:1690.2px;top:261px;font-size:11.49px;color:#262626;">Clear All</div>
<div class="a" style="left:1682.5px;top:696.5px;width:311.7px;height:33px;border:2px solid #2b579a;box-sizing:border-box;"></div>
<div class="t" style="left:1690.5px;top:293px;font-size:14.08px;color:#1a1a1a;">Bibliography</div>
<svg class="a" style="left:1981.5px;top:294.7px;" width="9" height="11" viewBox="0 0 9 11"><path d="M3.6 0.5H8.6v10.5H7.3V1.7H6.2v9.3H4.9V5.8C2.4 5.8 0.8 4.7 0.8 3.1S2.4 0.5 3.6 0.5z" fill="#5a5a5a"/></svg>
<div class="t" style="left:1690.5px;top:327px;font-size:16.59px;color:#000;font-family:'Liberation Serif', serif;">center</div>
<svg class="a" style="left:1981.5px;top:329.09999999999997px;" width="9" height="11" viewBox="0 0 9 11"><path d="M3.6 0.5H8.6v10.5H7.3V1.7H6.2v9.3H4.9V5.8C2.4 5.8 0.8 4.7 0.8 3.1S2.4 0.5 3.6 0.5z" fill="#5a5a5a"/></svg>
<div class="t" style="left:1690.5px;top:362px;font-size:14.57px;color:#1a1a1a;">Footer</div>
<svg class="a" style="left:1978px;top:362.5px;" width="5.5" height="9" viewBox="0 0 5.5 9"><path d="M2.3 0.5H5.2v8.5H4.3V1.3H3.6v7.7H2.7V4.6C1.3 4.6 0.4 3.8 0.4 2.6S1.3 0.5 2.3 0.5z" fill="#5a5a5a"/></svg>
<div class="t" style="left:1983.5px;top:363px;font-size:11.5px;color:#5a5a5a;font-weight:bold;font-family:'Liberation Serif', serif;">a</div>
<div class="a" style="left:1978px;top:372.40000000000003px;width:12px;height:1.4px;background:#5a5a5a;"></div>
<div class="t" style="left:1690.5px;top:398px;font-size:12.91px;color:#1a1a1a;">Footnote Text</div>
<svg class="a" style="left:1978px;top:396.9px;" width="5.5" height="9" viewBox="0 0 5.5 9"><path d="M2.3 0.5H5.2v8.5H4.3V1.3H3.6v7.7H2.7V4.6C1.3 4.6 0.4 3.8 0.4 2.6S1.3 0.5 2.3 0.5z" fill="#5a5a5a"/></svg>
<div class="t" style="left:1983.5px;top:397px;font-size:11.5px;color:#5a5a5a;font-weight:bold;font-family:'Liberation Serif', serif;">a</div>
<div class="a" style="left:1978px;top:406.8px;width:12px;height:1.4px;background:#5a5a5a;"></div>
<div class="t" style="left:1808.2px;top:430px;font-size:15.45px;color:#000;font-family:'Liberation Serif', serif;">Header</div>
<svg class="a" style="left:1978px;top:431.3px;" width="5.5" height="9" viewBox="0 0 5.5 9"><path d="M2.3 0.5H5.2v8.5H4.3V1.3H3.6v7.7H2.7V4.6C1.3 4.6 0.4 3.8 0.4 2.6S1.3 0.5 2.3 0.5z" fill="#5a5a5a"/></svg>
<div class="t" style="left:1983.5px;top:432px;font-size:11.5px;color:#5a5a5a;font-weight:bold;font-family:'Liberation Serif', serif;">a</div>
<div class="a" style="left:1978px;top:441.20000000000005px;width:12px;height:1.4px;background:#5a5a5a;"></div>
<div class="t" style="left:1690.5px;top:464px;font-size:19.3px;color:#2f5496;">Heading 1</div>
<svg class="a" style="left:1978px;top:465.7px;" width="5.5" height="9" viewBox="0 0 5.5 9"><path d="M2.3 0.5H5.2v8.5H4.3V1.3H3.6v7.7H2.7V4.6C1.3 4.6 0.4 3.8 0.4 2.6S1.3 0.5 2.3 0.5z" fill="#5a5a5a"/></svg>
<div class="t" style="left:1983.5px;top:466px;font-size:11.5px;color:#5a5a5a;font-weight:bold;font-family:'Liberation Serif', serif;">a</div>
<div class="a" style="left:1978px;top:475.6px;width:12px;height:1.4px;background:#5a5a5a;"></div>
<div class="t" style="left:1690.5px;top:499px;font-size:17.43px;color:#000;font-family:'Liberation Serif', serif;-webkit-text-stroke:0.15px #000;">Heading 2</div>
<svg class="a" style="left:1978px;top:500.09999999999997px;" width="5.5" height="9" viewBox="0 0 5.5 9"><path d="M2.3 0.5H5.2v8.5H4.3V1.3H3.6v7.7H2.7V4.6C1.3 4.6 0.4 3.8 0.4 2.6S1.3 0.5 2.3 0.5z" fill="#5a5a5a"/></svg>
<div class="t" style="left:1983.5px;top:500px;font-size:11.5px;color:#5a5a5a;font-weight:bold;font-family:'Liberation Serif', serif;">a</div>
<div class="a" style="left:1978px;top:510.0px;width:12px;height:1.4px;background:#5a5a5a;"></div>
<div class="t" style="left:1690.5px;top:535px;font-size:14.91px;color:#3d5a8a;">Heading 3</div>
<svg class="a" style="left:1978px;top:534.5px;" width="5.5" height="9" viewBox="0 0 5.5 9"><path d="M2.3 0.5H5.2v8.5H4.3V1.3H3.6v7.7H2.7V4.6C1.3 4.6 0.4 3.8 0.4 2.6S1.3 0.5 2.3 0.5z" fill="#5a5a5a"/></svg>
<div class="t" style="left:1983.5px;top:535px;font-size:11.5px;color:#5a5a5a;font-weight:bold;font-family:'Liberation Serif', serif;">a</div>
<div class="a" style="left:1978px;top:544.4px;width:12px;height:1.4px;background:#5a5a5a;"></div>
<div class="t" style="left:1690.5px;top:569px;font-size:13.93px;color:#2f5496;font-style:italic;">Heading 4</div>
<svg class="a" style="left:1978px;top:568.9000000000001px;" width="5.5" height="9" viewBox="0 0 5.5 9"><path d="M2.3 0.5H5.2v8.5H4.3V1.3H3.6v7.7H2.7V4.6C1.3 4.6 0.4 3.8 0.4 2.6S1.3 0.5 2.3 0.5z" fill="#5a5a5a"/></svg>
<div class="t" style="left:1983.5px;top:569px;font-size:11.5px;color:#5a5a5a;font-weight:bold;font-family:'Liberation Serif', serif;">a</div>
<div class="a" style="left:1978px;top:578.8000000000001px;width:12px;height:1.4px;background:#5a5a5a;"></div>
<div class="t" style="left:1690.5px;top:602px;font-size:14.51px;color:#0563c1;text-decoration:underline;text-underline-offset:1.5px;">Hyperlink</div>
<div class="t" style="left:1983.5px;top:602px;font-size:13px;color:#5a5a5a;font-weight:bold;font-family:'Liberation Serif', serif;">a</div>
<div class="t" style="left:1690.5px;top:637px;font-size:16.66px;color:#000;font-family:'Liberation Serif', serif;">letter</div>
<svg class="a" style="left:1981.5px;top:638.7px;" width="9" height="11" viewBox="0 0 9 11"><path d="M3.6 0.5H8.6v10.5H7.3V1.7H6.2v9.3H4.9V5.8C2.4 5.8 0.8 4.7 0.8 3.1S2.4 0.5 3.6 0.5z" fill="#5a5a5a"/></svg>
<div class="t" style="left:1690.5px;top:671px;font-size:16.12px;color:#000;font-family:'Liberation Serif', serif;">msonormal</div>
<svg class="a" style="left:1981.5px;top:673.1px;" width="9" height="11" viewBox="0 0 9 11"><path d="M3.6 0.5H8.6v10.5H7.3V1.7H6.2v9.3H4.9V5.8C2.4 5.8 0.8 4.7 0.8 3.1S2.4 0.5 3.6 0.5z" fill="#5a5a5a"/></svg>
<div class="t" style="left:1690.5px;top:706px;font-size:14.52px;color:#1a1a1a;">Normal</div>
<svg class="a" style="left:1981.5px;top:707.5px;" width="9" height="11" viewBox="0 0 9 11"><path d="M3.6 0.5H8.6v10.5H7.3V1.7H6.2v9.3H4.9V5.8C2.4 5.8 0.8 4.7 0.8 3.1S2.4 0.5 3.6 0.5z" fill="#5a5a5a"/></svg>
<div class="t" style="left:1690.5px;top:740px;font-size:15.9px;color:#000;font-family:'Liberation Serif', serif;">p2</div>
<svg class="a" style="left:1981.5px;top:741.9000000000001px;" width="9" height="11" viewBox="0 0 9 11"><path d="M3.6 0.5H8.6v10.5H7.3V1.7H6.2v9.3H4.9V5.8C2.4 5.8 0.8 4.7 0.8 3.1S2.4 0.5 3.6 0.5z" fill="#5a5a5a"/></svg>
<div class="t" style="left:1690.5px;top:774px;font-size:16.3px;color:#000;font-family:'Liberation Serif', serif;">poem</div>
<svg class="a" style="left:1981.5px;top:776.3px;" width="9" height="11" viewBox="0 0 9 11"><path d="M3.6 0.5H8.6v10.5H7.3V1.7H6.2v9.3H4.9V5.8C2.4 5.8 0.8 4.7 0.8 3.1S2.4 0.5 3.6 0.5z" fill="#5a5a5a"/></svg>
<div class="t" style="left:1690.5px;top:809px;font-size:16.11px;color:#000;font-family:'Liberation Serif', serif;">right</div>
<svg class="a" style="left:1981.5px;top:810.7px;" width="9" height="11" viewBox="0 0 9 11"><path d="M3.6 0.5H8.6v10.5H7.3V1.7H6.2v9.3H4.9V5.8C2.4 5.8 0.8 4.7 0.8 3.1S2.4 0.5 3.6 0.5z" fill="#5a5a5a"/></svg>
<div class="t" style="left:1802.2px;top:843px;font-size:14.5px;color:#000;font-family:'Liberation Serif', serif;letter-spacing:1.6px;">Subtitle</div>
<svg class="a" style="left:1978px;top:844.1px;" width="5.5" height="9" viewBox="0 0 5.5 9"><path d="M2.3 0.5H5.2v8.5H4.3V1.3H3.6v7.7H2.7V4.6C1.3 4.6 0.4 3.8 0.4 2.6S1.3 0.5 2.3 0.5z" fill="#5a5a5a"/></svg>
<div class="t" style="left:1983.5px;top:844px;font-size:11.5px;color:#5a5a5a;font-weight:bold;font-family:'Liberation Serif', serif;">a</div>
<div class="a" style="left:1978px;top:854.0px;width:12px;height:1.4px;background:#5a5a5a;"></div>
<div class="t" style="left:1715.4px;top:879px;font-size:12.77px;color:#1a1a1a;">task03content</div>
<svg class="a" style="left:1981.5px;top:879.5px;" width="9" height="11" viewBox="0 0 9 11"><path d="M3.6 0.5H8.6v10.5H7.3V1.7H6.2v9.3H4.9V5.8C2.4 5.8 0.8 4.7 0.8 3.1S2.4 0.5 3.6 0.5z" fill="#5a5a5a"/></svg>
<div class="t" style="left:1813.6px;top:909px;font-size:21px;color:#333;letter-spacing:-0.5px;transform:scaleX(0.86);transform-origin:left;">Title</div>
<svg class="a" style="left:1978px;top:912.9px;" width="5.5" height="9" viewBox="0 0 5.5 9"><path d="M2.3 0.5H5.2v8.5H4.3V1.3H3.6v7.7H2.7V4.6C1.3 4.6 0.4 3.8 0.4 2.6S1.3 0.5 2.3 0.5z" fill="#5a5a5a"/></svg>
<div class="t" style="left:1983.5px;top:913px;font-size:11.5px;color:#5a5a5a;font-weight:bold;font-family:'Liberation Serif', serif;">a</div>
<div class="a" style="left:1978px;top:922.8px;width:12px;height:1.4px;background:#5a5a5a;"></div>
<div class="t" style="left:1690.5px;top:948px;font-size:12.37px;color:#1a1a1a;">TOC 1</div>
<svg class="a" style="left:1981.5px;top:948.3000000000001px;" width="9" height="11" viewBox="0 0 9 11"><path d="M3.6 0.5H8.6v10.5H7.3V1.7H6.2v9.3H4.9V5.8C2.4 5.8 0.8 4.7 0.8 3.1S2.4 0.5 3.6 0.5z" fill="#5a5a5a"/></svg>
<div class="a" style="left:1682.4px;top:1007.3px;width:13.5px;height:13.5px;background:#fff;border:1px solid #b0b0b0;box-sizing:border-box;"></div>
<svg class="a" style="left:1684.5px;top:1009.8px;" width="10" height="8" viewBox="0 0 10 8"><path d="M0.8 4l3 3l5.5-6.2" fill="none" stroke="#555" stroke-width="1.3"/></svg>
<div class="t" style="left:1701px;top:1010px;font-size:11.99px;color:#444;">Show Preview</div>
<div class="a" style="left:1682.4px;top:1030.3px;width:13.5px;height:13.5px;background:#fff;border:1px solid #b0b0b0;box-sizing:border-box;"></div>
<div class="t" style="left:1701px;top:1033px;font-size:11.82px;color:#444;">Disable Linked Styles</div>
<div class="a" style="left:1682.4px;top:1052.6px;width:24.399999999999864px;height:24.5px;background:#fff;border:1px solid #c6c6c6;box-sizing:border-box;"></div>
<div class="a" style="left:1716.3px;top:1052.6px;width:24.700000000000045px;height:24.5px;background:#fff;border:1px solid #c6c6c6;box-sizing:border-box;"></div>
<div class="a" style="left:1751px;top:1052.6px;width:24.90000000000009px;height:24.5px;background:#fff;border:1px solid #c6c6c6;box-sizing:border-box;"></div>
<div class="t" style="left:1686px;top:1058px;font-size:19px;color:#444;font-weight:300;">A</div>
<svg class="a" style="left:1697.5px;top:1065px;" width="9" height="9" viewBox="0 0 9 9"><path d="M4.5 0.5v8M0.5 4.5h8" stroke="#21a366" stroke-width="1.3"/></svg>
<div class="t" style="left:1720px;top:1058px;font-size:19px;color:#444;font-weight:300;">A</div>
<svg class="a" style="left:1728px;top:1063px;" width="11" height="11" viewBox="0 0 11 11"><circle cx="4.5" cy="4.5" r="3.3" fill="#fff" stroke="#2b7cd3" stroke-width="1.3"/><path d="M7 7l3.2 3.2" stroke="#2b7cd3" stroke-width="1.3"/></svg>
<div class="t" style="left:1754.5px;top:1058px;font-size:19px;color:#444;font-weight:300;">A</div>
<svg class="a" style="left:1763px;top:1067px;" width="11" height="8" viewBox="0 0 11 8"><path d="M0.8 3.5l3 3.5l6.5-6.5" fill="none" stroke="#21a366" stroke-width="1.3"/></svg>
<div class="a" style="left:1785.4px;top:1052.6px;width:71.4px;height:25.1px;background:#fff;border:1px solid #c6c6c6;box-sizing:border-box;"></div>
<div class="t" style="left:1794.6px;top:1060px;font-size:12.39px;color:#444;">Options...</div>
<div class="t" style="left:40.6px;top:1100px;font-size:11.45px;color:#444;">Page 87 of 87</div>
<div class="t" style="left:131.6px;top:1100px;font-size:11.96px;color:#444;">41106 words</div>
<svg class="a" style="left:219px;top:1097px;" width="16" height="15" viewBox="0 0 16 15"><g fill="none" stroke="#555" stroke-width="1.1"><path d="M0.5 1.5v11h5M0.5 1.5h5v11M5.5 1.5h7v4"/><path d="M8 8l6 6M14 8l-6 6"/></g></svg>
<div class="t" style="left:253.3px;top:1099px;font-size:11.73px;color:#444;">English (United States)</div>
<svg class="a" style="left:1657.5px;top:1097px;" width="15" height="15" viewBox="0 0 15 15"><g fill="none" stroke="#444" stroke-width="1.1"><path d="M0.5 3.5V0.5H3.5M11.5 0.5h3v3M14.5 11.5v3h-3M3.5 14.5h-3v-3"/><path d="M3.5 2.5h5l3 3v7h-8z"/><path d="M8.5 2.5v3h3"/></g></svg>
<div class="t" style="left:1676.3px;top:1100px;font-size:11.05px;color:#444;">Focus</div>
<svg class="a" style="left:1733px;top:1097px;" width="15" height="14" viewBox="0 0 15 14"><g fill="none" stroke="#444" stroke-width="1.1"><path d="M0.5 0.5h6.5v12H0.5zM7 0.5h7v12H7z"/><path d="M2.2 3h3.2M2.2 5.3h3.2M2.2 7.6h3.2M2.2 9.9h3.2M8.7 3h3.6M8.7 5.3h3.6M8.7 7.6h3.6M8.7 9.9h3.6" stroke-width="1"/></g></svg>
<div class="a" style="left:1761.2px;top:1094px;width:41.6px;height:22px;background:#d2d0ce;"></div>
<svg class="a" style="left:1776px;top:1097px;" width="12" height="15" viewBox="0 0 12 15"><g fill="none" stroke="#333" stroke-width="1.1"><rect x="0.5" y="0.5" width="10.5" height="13.5"/><path d="M2.5 3h6.5M2.5 5.2h6.5M2.5 7.4h6.5M2.5 9.6h6.5M2.5 11.8h6.5" stroke-width="1"/></g></svg>
<svg class="a" style="left:1816px;top:1097px;" width="16" height="15" viewBox="0 0 16 15"><g fill="none" stroke="#444" stroke-width="1.1"><path d="M0.5 11.5V0.5h12.5v4"/><path d="M2.5 2.8h8.5M2.5 5h4.5M2.5 7.2h3.5M2.5 9.4h3.5" stroke-width="1"/></g><circle cx="11.5" cy="10.8" r="3.8" fill="#f3f2f1" stroke="#444" stroke-width="1.1"/><path d="M7.7 10.8h7.6M11.5 7c-1.3 2.3-1.3 5.3 0 7.6M11.5 7c1.3 2.3 1.3 5.3 0 7.6" fill="none" stroke="#444" stroke-width="0.9"/></svg>
<div class="a" style="left:1851px;top:1103.5px;width:8px;height:1.2px;background:#444;"></div>
<div class="a" style="left:1865px;top:1104px;width:103px;height:1px;background:#a0a0a0;"></div>
<div class="a" style="left:1914.8px;top:1098.5px;width:4.8px;height:12px;background:#555;"></div>
<svg class="a" style="left:1973.5px;top:1100px;" width="9" height="9" viewBox="0 0 9 9"><path d="M4.5 0v9M0 4.5h9" stroke="#444" stroke-width="1.2"/></svg>
<div class="t" style="left:1996.5px;top:1100px;font-size:10.6px;color:#444;">100%</div>
<div class="a" style="left:947.5px;top:316.5px;width:445px;height:555.5px;background:#f0f0f0;border:1px solid #6e6e6e;box-sizing:border-box;box-shadow:0 0 18px rgba(0,0,0,0.16), 4px 9px 34px rgba(0,0,0,0.55);"></div>
<div class="a" style="left:948.5px;top:317.5px;width:443px;height:47px;background:#fff;"></div>
<div class="t" style="left:962px;top:332px;font-size:18.32px;color:#000;">Mark Index Entry</div>
<div class="t" style="left:1280.5px;top:331px;font-size:20.5px;color:#000;">?</div>
<svg class="a" style="left:1347px;top:331.5px;" width="17" height="17" viewBox="0 0 17 17"><path d="M0.5 0.5l16 16M16.5 0.5l-16 16" stroke="#000" stroke-width="1.1"/></svg>
<div class="t" style="left:958.5px;top:378px;font-size:17.78px;color:#000;">Index</div>
<div class="a" style="left:1010px;top:385px;width:372px;height:1px;background:#d5d5d5;"></div>
<div class="t" style="left:972.8px;top:413px;font-size:18.02px;color:#000;">Main <u>e</u>ntry:</div>
<div class="a" style="left:1076.8px;top:406.8px;width:305px;height:30px;background:#fff;border:2px solid #7a7e87;box-sizing:border-box;"></div>
<div class="a" style="left:1082px;top:412px;width:1.2px;height:20px;background:#000;"></div>
<div class="t" style="left:972.5px;top:450px;font-size:17.64px;color:#000;"><u>S</u>ubentry:</div>
<div class="a" style="left:1076.8px;top:442.9px;width:305px;height:30px;background:#fff;border:2px solid #7a7e87;box-sizing:border-box;"></div>
<div class="t" style="left:958.5px;top:489px;font-size:18.57px;color:#000;">Options</div>
<div class="a" style="left:1031.7px;top:495.5px;width:350px;height:1px;background:#d5d5d5;"></div>
<div class="a" style="left:972.5px;top:520.2px;width:19px;height:19px;border-radius:50%;background:#fff;border:1.6px solid #333;box-sizing:border-box;"></div>
<div class="t" style="left:999.8px;top:522px;font-size:17.14px;color:#000;"><u>C</u>ross-reference:</div>
<div class="a" style="left:1147.6px;top:517.9px;width:234px;height:30px;background:#fff;border:2px solid #7a7e87;box-sizing:border-box;"></div>
<div class="t" style="left:1152px;top:525px;font-size:15.73px;color:#000;font-style:italic;">See</div>
<div class="a" style="left:972.5px;top:558.7px;width:19px;height:19px;border-radius:50%;background:#fff;border:1.6px solid #333;box-sizing:border-box;"></div>
<div class="a" style="left:977px;top:563.2px;width:10px;height:10px;border-radius:50%;background:#1a1a1a;"></div>
<div class="t" style="left:999.8px;top:560px;font-size:17.96px;color:#000;">Current <u>p</u>age</div>
<div class="a" style="left:972.5px;top:594.6px;width:19px;height:19px;border-radius:50%;background:#fff;border:1.6px solid #333;box-sizing:border-box;"></div>
<div class="t" style="left:999.8px;top:596px;font-size:17.25px;color:#000;">Page ra<u>n</u>ge</div>
<div class="t" style="left:1001px;top:633px;font-size:17.37px;color:#8d8d8d;">Bookmark:</div>
<div class="a" style="left:1099px;top:625.4px;width:282.5px;height:29.6px;background:#f0f0f0;border:2px solid #cfcfcf;box-sizing:border-box;"></div>
<div class="a" style="left:1354.3px;top:625.4px;width:27.2px;height:29.6px;background:#e6e6e6;border:2px solid #bdbdbd;box-sizing:border-box;"></div>
<svg class="a" style="left:1361px;top:636px;" width="13" height="8" viewBox="0 0 13 8"><path d="M0.7 0.7l5.8 5.8l5.8-5.8" fill="none" stroke="#555" stroke-width="1.4"/></svg>
<div class="t" style="left:958.5px;top:672px;font-size:17.92px;color:#000;">Page number format</div>
<div class="a" style="left:1130.6px;top:678.5px;width:251px;height:1px;background:#d5d5d5;"></div>
<div class="a" style="left:972px;top:701.9px;width:20px;height:19.5px;background:#fff;border:1.6px solid #333;box-sizing:border-box;"></div>
<div class="t" style="left:999.2px;top:705px;font-size:17.38px;color:#000;"><u>B</u>old</div>
<div class="a" style="left:972px;top:731.2px;width:20px;height:19.5px;background:#fff;border:1.6px solid #333;box-sizing:border-box;"></div>
<div class="t" style="left:999.2px;top:733px;font-size:18.14px;color:#000;"><u>I</u>talic</div>
<div class="t" style="left:958.5px;top:770px;font-size:18.05px;color:#000;">This dialog box stays open so that you can mark</div>
<div class="t" style="left:958.5px;top:791px;font-size:18.35px;color:#000;">multiple index entries.</div>
<div class="a" style="left:1002px;top:825px;width:115px;height:33.6px;background:#e1e1e1;border:2px solid #0078d7;box-sizing:border-box;"></div>
<div class="t" style="left:1039.5px;top:833px;font-size:18.46px;color:#000;"><u>M</u>ark</div>
<div class="a" style="left:1133.4px;top:825px;width:115px;height:33.6px;background:#e1e1e1;border:1px solid #adadad;box-sizing:border-box;"></div>
<div class="t" style="left:1158.5px;top:833px;font-size:18.42px;color:#838383;">Mark All</div>
<div class="a" style="left:1265px;top:825px;width:115.3px;height:33.6px;background:#e1e1e1;border:1px solid #adadad;box-sizing:border-box;"></div>
<div class="t" style="left:1296.5px;top:835px;font-size:16.86px;color:#000;">Cancel</div>
</body></html>
